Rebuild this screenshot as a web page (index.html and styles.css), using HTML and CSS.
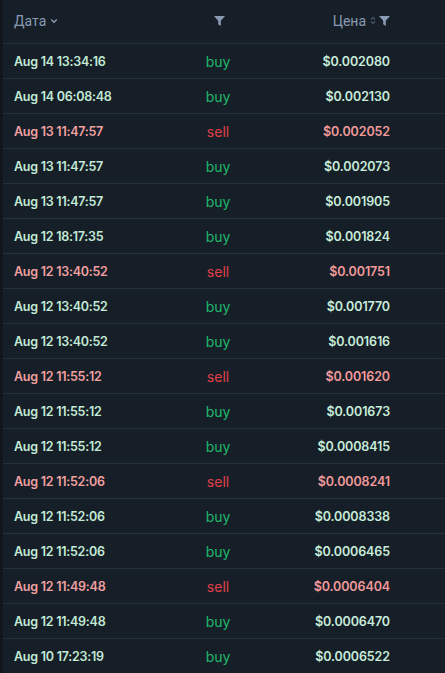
FILE: index.html
```html
<!DOCTYPE html>
<html>
<head>
<meta charset="utf-8">
<link rel="stylesheet" href="styles.css">
</head>
<body>
<div class="panel">
  <div class="row head">
    <div class="c-date"><span>Дата</span>
      <svg class="chev" width="8" height="6" viewBox="0 0 8 6"><path d="M1.2 1.5 L4 4.2 L6.8 1.5" fill="none" stroke="#8a9ab2" stroke-width="1.4"/></svg>
    </div>
    <div class="c-side">
      <svg class="funnel" width="11" height="10" viewBox="0 0 10 9"><path d="M0 0 H10 L6.2 4.2 V9 L3.8 7.4 V4.2 Z" fill="#8a9ab2"/></svg>
    </div>
    <div class="c-price"><span>Цена</span>
      <svg class="sort" width="6" height="9" viewBox="0 0 6 9"><path d="M1 3.5 L3 1.5 L5 3.5 M1 5.5 L3 7.5 L5 5.5" fill="none" stroke="#4c5868" stroke-width="1.2"/></svg>
      <svg class="funnel" width="11" height="10" viewBox="0 0 10 9"><path d="M0 0 H10 L6.2 4.2 V9 L3.8 7.4 V4.2 Z" fill="#8a9ab2"/></svg>
    </div>
  </div>
  <div class="row buy"><div class="c-date">Aug 14 13:34:16</div><div class="c-side">buy</div><div class="c-price">$0.002080</div></div>
  <div class="row buy"><div class="c-date">Aug 14 06:08:48</div><div class="c-side">buy</div><div class="c-price">$0.002130</div></div>
  <div class="row sell"><div class="c-date">Aug 13 11:47:57</div><div class="c-side">sell</div><div class="c-price">$0.002052</div></div>
  <div class="row buy"><div class="c-date">Aug 13 11:47:57</div><div class="c-side">buy</div><div class="c-price">$0.002073</div></div>
  <div class="row buy"><div class="c-date">Aug 13 11:47:57</div><div class="c-side">buy</div><div class="c-price">$0.001905</div></div>
  <div class="row buy"><div class="c-date">Aug 12 18:17:35</div><div class="c-side">buy</div><div class="c-price">$0.001824</div></div>
  <div class="row sell"><div class="c-date">Aug 12 13:40:52</div><div class="c-side">sell</div><div class="c-price">$0.001751</div></div>
  <div class="row buy"><div class="c-date">Aug 12 13:40:52</div><div class="c-side">buy</div><div class="c-price">$0.001770</div></div>
  <div class="row buy"><div class="c-date">Aug 12 13:40:52</div><div class="c-side">buy</div><div class="c-price">$0.001616</div></div>
  <div class="row sell"><div class="c-date">Aug 12 11:55:12</div><div class="c-side">sell</div><div class="c-price">$0.001620</div></div>
  <div class="row buy"><div class="c-date">Aug 12 11:55:12</div><div class="c-side">buy</div><div class="c-price">$0.001673</div></div>
  <div class="row buy"><div class="c-date">Aug 12 11:55:12</div><div class="c-side">buy</div><div class="c-price">$0.0008415</div></div>
  <div class="row sell"><div class="c-date">Aug 12 11:52:06</div><div class="c-side">sell</div><div class="c-price">$0.0008241</div></div>
  <div class="row buy"><div class="c-date">Aug 12 11:52:06</div><div class="c-side">buy</div><div class="c-price">$0.0008338</div></div>
  <div class="row buy"><div class="c-date">Aug 12 11:52:06</div><div class="c-side">buy</div><div class="c-price">$0.0006465</div></div>
  <div class="row sell"><div class="c-date">Aug 12 11:49:48</div><div class="c-side">sell</div><div class="c-price">$0.0006404</div></div>
  <div class="row buy"><div class="c-date">Aug 12 11:49:48</div><div class="c-side">buy</div><div class="c-price">$0.0006470</div></div>
  <div class="row buy"><div class="c-date">Aug 10 17:23:19</div><div class="c-side">buy</div><div class="c-price">$0.0006522</div></div>
</div>
</body>
</html>
```
FILE: styles.css
```css
html, body {
  margin: 0;
  padding: 0;
  background: #161f28;
  height: 100%;
  overflow: hidden;
}
.panel {
  border-left: 3px solid #10161c;
  background: #161f28;
  min-height: 673px;
  box-sizing: border-box;
}
.row {
  display: grid;
  grid-template-columns: 150px 130px 107px 1fr;
  height: 35px;
  box-sizing: border-box;
  border-bottom: 1px solid #243240;
  align-items: center;
  font-family: "Inter", "Noto Sans", sans-serif;
}
.row.head {
  height: 44px;
  font-family: "Roboto", "Liberation Sans", sans-serif;
  font-size: 14px;
  color: #8a9ab2;
  padding-bottom: 2px;
}
.c-date {
  padding-left: 11px;
  font-size: 12.5px;
  font-weight: 600;
  letter-spacing: -0.25px;
  white-space: nowrap;
}
.c-side {
  text-align: center;
  font-size: 14px;
  font-weight: 400;
}
.c-price {
  text-align: right;
  font-size: 12.5px;
  font-weight: 600;
  letter-spacing: -0.1px;
  white-space: nowrap;
}
.head .c-date, .head .c-side, .head .c-price {
  font-weight: 400;
  font-size: 14px;
  letter-spacing: 0;
  display: flex;
  align-items: center;
}
.head .c-date { gap: 4px; }
.head .c-side { justify-content: center; padding-left: 3px; }
.head .c-price { justify-content: flex-end; gap: 3px; }
.head .c-price .sort { margin-left: 1px; }
.buy .c-date { color: #c3ead6; }
.buy .c-side { color: #1fb86c; }
.buy .c-price { color: #c8ecda; }
.sell .c-date { color: #f0a0a0; }
.sell .c-side { color: #e0404a; }
.sell .c-price { color: #f29a9a; }
```
